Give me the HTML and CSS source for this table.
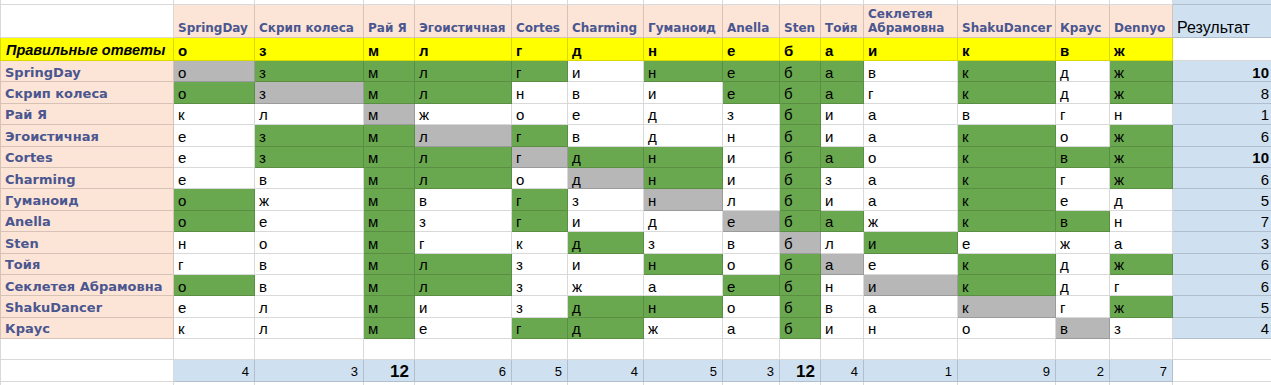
FILE: index.html
```html
<!DOCTYPE html>
<html lang="ru">
<head>
<meta charset="utf-8">
<title>Результаты</title>
<link rel="stylesheet" href="styles.css">
</head>
<body>
<div class="sheet">
  <!-- top partial row -->
  <div class="c f"></div><div class="c"></div><div class="c"></div><div class="c"></div><div class="c"></div><div class="c"></div><div class="c"></div><div class="c"></div><div class="c"></div><div class="c"></div><div class="c"></div><div class="c"></div><div class="c"></div><div class="c"></div><div class="c"></div><div class="c bl"></div>
  <!-- header -->
  <div class="c f"></div>
  <div class="c h">SpringDay</div><div class="c h">Скрип колеса</div><div class="c h">Рай Я</div><div class="c h">Эгоистичная</div><div class="c h">Cortes</div><div class="c h">Charming</div><div class="c h">Гуманоид</div><div class="c h">Anella</div><div class="c h">Sten</div><div class="c h">Тойя</div><div class="c h">Секлетея Абрамовна</div><div class="c h">ShakuDancer</div><div class="c h">Краус</div><div class="c h">Dennyo</div>
  <div class="c bl rh">Результат</div>
  <!-- answers -->
  <div class="c f y ans">Правильные ответы</div>
  <div class="c y k">о</div><div class="c y k">з</div><div class="c y k">м</div><div class="c y k">л</div><div class="c y k">г</div><div class="c y k">д</div><div class="c y k">н</div><div class="c y k">е</div><div class="c y k">б</div><div class="c y k">а</div><div class="c y k">и</div><div class="c y k">к</div><div class="c y k">в</div><div class="c y k">ж</div>
  <div class="c"></div>
  <!-- SpringDay -->
  <div class="c f n">SpringDay</div>
  <div class="c x">о</div><div class="c g">з</div><div class="c g">м</div><div class="c g">л</div><div class="c g">г</div><div class="c">и</div><div class="c g">н</div><div class="c g">е</div><div class="c g">б</div><div class="c g">а</div><div class="c">в</div><div class="c g">к</div><div class="c">д</div><div class="c g">ж</div>
  <div class="c bl num b">10</div>
  <!-- Скрип колеса -->
  <div class="c f n">Скрип колеса</div>
  <div class="c g">о</div><div class="c x">з</div><div class="c g">м</div><div class="c g">л</div><div class="c">н</div><div class="c">в</div><div class="c">и</div><div class="c g">е</div><div class="c g">б</div><div class="c g">а</div><div class="c">г</div><div class="c g">к</div><div class="c">д</div><div class="c g">ж</div>
  <div class="c bl num">8</div>
  <!-- Рай Я -->
  <div class="c f n">Рай Я</div>
  <div class="c">к</div><div class="c">л</div><div class="c x">м</div><div class="c">ж</div><div class="c">о</div><div class="c">е</div><div class="c">д</div><div class="c">з</div><div class="c g">б</div><div class="c">и</div><div class="c">а</div><div class="c">в</div><div class="c">г</div><div class="c">н</div>
  <div class="c bl num">1</div>
  <!-- Эгоистичная -->
  <div class="c f n">Эгоистичная</div>
  <div class="c">е</div><div class="c g">з</div><div class="c g">м</div><div class="c x">л</div><div class="c g">г</div><div class="c">в</div><div class="c">д</div><div class="c">н</div><div class="c g">б</div><div class="c">и</div><div class="c">а</div><div class="c g">к</div><div class="c">о</div><div class="c g">ж</div>
  <div class="c bl num">6</div>
  <!-- Cortes -->
  <div class="c f n">Cortes</div>
  <div class="c">е</div><div class="c g">з</div><div class="c g">м</div><div class="c g">л</div><div class="c x">г</div><div class="c g">д</div><div class="c g">н</div><div class="c">и</div><div class="c g">б</div><div class="c g">а</div><div class="c">о</div><div class="c g">к</div><div class="c g">в</div><div class="c g">ж</div>
  <div class="c bl num b">10</div>
  <!-- Charming -->
  <div class="c f n">Charming</div>
  <div class="c">е</div><div class="c">в</div><div class="c g">м</div><div class="c g">л</div><div class="c">о</div><div class="c x">д</div><div class="c g">н</div><div class="c">и</div><div class="c g">б</div><div class="c">з</div><div class="c">а</div><div class="c g">к</div><div class="c">г</div><div class="c g">ж</div>
  <div class="c bl num">6</div>
  <!-- Гуманоид -->
  <div class="c f n">Гуманоид</div>
  <div class="c g">о</div><div class="c">ж</div><div class="c g">м</div><div class="c">в</div><div class="c g">г</div><div class="c">з</div><div class="c x">н</div><div class="c">л</div><div class="c g">б</div><div class="c">и</div><div class="c">а</div><div class="c g">к</div><div class="c">е</div><div class="c">д</div>
  <div class="c bl num">5</div>
  <!-- Anella -->
  <div class="c f n">Anella</div>
  <div class="c g">о</div><div class="c">е</div><div class="c g">м</div><div class="c">з</div><div class="c g">г</div><div class="c">и</div><div class="c">д</div><div class="c x">е</div><div class="c g">б</div><div class="c g">а</div><div class="c">ж</div><div class="c g">к</div><div class="c g">в</div><div class="c">н</div>
  <div class="c bl num">7</div>
  <!-- Sten -->
  <div class="c f n">Sten</div>
  <div class="c">н</div><div class="c">о</div><div class="c g">м</div><div class="c">г</div><div class="c">к</div><div class="c g">д</div><div class="c">з</div><div class="c">в</div><div class="c x">б</div><div class="c">л</div><div class="c g">и</div><div class="c">е</div><div class="c">ж</div><div class="c">а</div>
  <div class="c bl num">3</div>
  <!-- Тойя -->
  <div class="c f n">Тойя</div>
  <div class="c">г</div><div class="c">в</div><div class="c g">м</div><div class="c g">л</div><div class="c">з</div><div class="c">и</div><div class="c g">н</div><div class="c">о</div><div class="c g">б</div><div class="c x">а</div><div class="c">е</div><div class="c g">к</div><div class="c">д</div><div class="c g">ж</div>
  <div class="c bl num">6</div>
  <!-- Секлетея Абрамовна -->
  <div class="c f n">Секлетея Абрамовна</div>
  <div class="c g">о</div><div class="c">в</div><div class="c g">м</div><div class="c g">л</div><div class="c">з</div><div class="c">ж</div><div class="c">а</div><div class="c g">е</div><div class="c g">б</div><div class="c">н</div><div class="c x">и</div><div class="c g">к</div><div class="c">д</div><div class="c">г</div>
  <div class="c bl num">6</div>
  <!-- ShakuDancer -->
  <div class="c f n">ShakuDancer</div>
  <div class="c">е</div><div class="c">л</div><div class="c g">м</div><div class="c">и</div><div class="c">з</div><div class="c g">д</div><div class="c g">н</div><div class="c">о</div><div class="c g">б</div><div class="c">в</div><div class="c">а</div><div class="c x">к</div><div class="c">г</div><div class="c g">ж</div>
  <div class="c bl num">5</div>
  <!-- Краус -->
  <div class="c f n">Краус</div>
  <div class="c">к</div><div class="c">л</div><div class="c g">м</div><div class="c">е</div><div class="c g">г</div><div class="c g">д</div><div class="c">ж</div><div class="c">а</div><div class="c g">б</div><div class="c">и</div><div class="c">н</div><div class="c">о</div><div class="c x">в</div><div class="c">з</div>
  <div class="c bl num">4</div>
  <!-- empty row -->
  <div class="c f"></div><div class="c"></div><div class="c"></div><div class="c"></div><div class="c"></div><div class="c"></div><div class="c"></div><div class="c"></div><div class="c"></div><div class="c"></div><div class="c"></div><div class="c"></div><div class="c"></div><div class="c"></div><div class="c"></div><div class="c"></div>
  <!-- sums -->
  <div class="c f"></div>
  <div class="c bl sum">4</div><div class="c bl sum">3</div><div class="c bl sum sb">12</div><div class="c bl sum">6</div><div class="c bl sum">5</div><div class="c bl sum">4</div><div class="c bl sum">5</div><div class="c bl sum">3</div><div class="c bl sum sb">12</div><div class="c bl sum">4</div><div class="c bl sum">1</div><div class="c bl sum">9</div><div class="c bl sum">2</div><div class="c bl sum">7</div>
  <div class="c"></div>
  <!-- bottom partial row -->
  <div class="c f"></div><div class="c"></div><div class="c"></div><div class="c"></div><div class="c"></div><div class="c"></div><div class="c"></div><div class="c"></div><div class="c"></div><div class="c"></div><div class="c"></div><div class="c"></div><div class="c"></div><div class="c"></div><div class="c"></div><div class="c"></div>
</div>
</body>
</html>
```

FILE: styles.css
```css
html, body {
  margin: 0;
  padding: 0;
  background: #ffffff;
  overflow: hidden;
}

.sheet {
  display: grid;
  margin-left: 1px;
  width: max-content;
  grid-template-columns: 173px 81px 109px 51px 97px 56px 76px 79px 57px 41px 43px 94px 98px 54px 63px 100px;
  grid-template-rows: 5px 33px 23px repeat(15, 21.4px) 4px;
  font-family: "Liberation Sans", Arial, sans-serif;
  font-size: 15px;
  color: #000;
}

.c {
  box-sizing: border-box;
  border-right: 1px solid rgba(0, 0, 0, 0.15);
  border-bottom: 1px solid rgba(0, 0, 0, 0.15);
  padding: 2px 3px 0 4px;
  display: flex;
  align-items: center;
  white-space: nowrap;
  overflow: hidden;
  line-height: 17px;
  background: #ffffff;
}

.f {
  border-left: 1px solid rgba(0, 0, 0, 0.15);
  margin-left: -1px;
  padding-left: 4px;
}

.h {
  background: #fce4d6;
  font-family: "DejaVu Sans", Verdana, sans-serif;
  font-weight: bold;
  font-size: 12px;
  line-height: 14px;
  color: #4a5690;
  align-items: flex-end;
  padding-top: 0;
  padding-bottom: 2px;
  white-space: normal;
}

.rh {
  align-items: flex-end;
  font-size: 16px;
  padding-top: 0;
  padding-bottom: 1px;
}

.y {
  background: #ffff00;
}

.k {
  font-weight: bold;
}

.ans {
  font-weight: bold;
  font-style: italic;
  font-size: 14.5px;
  padding-left: 5px;
}

.n {
  background: #fce4d6;
  font-family: "DejaVu Sans", Verdana, sans-serif;
  font-weight: bold;
  font-size: 13px;
  color: #4a5690;
}

.g {
  background: #6aa84f;
}

.x {
  background: #b7b7b7;
}

.bl {
  background: #cfe0f1;
}

.num {
  justify-content: flex-end;
  padding-right: 3px;
}

.b {
  font-weight: bold;
}

.sum {
  justify-content: flex-end;
  padding-right: 5px;
  padding-top: 0;
  font-size: 13px;
  align-items: flex-end;
  padding-bottom: 1px;
}

.sb {
  font-weight: bold;
  font-size: 17px;
}
```
